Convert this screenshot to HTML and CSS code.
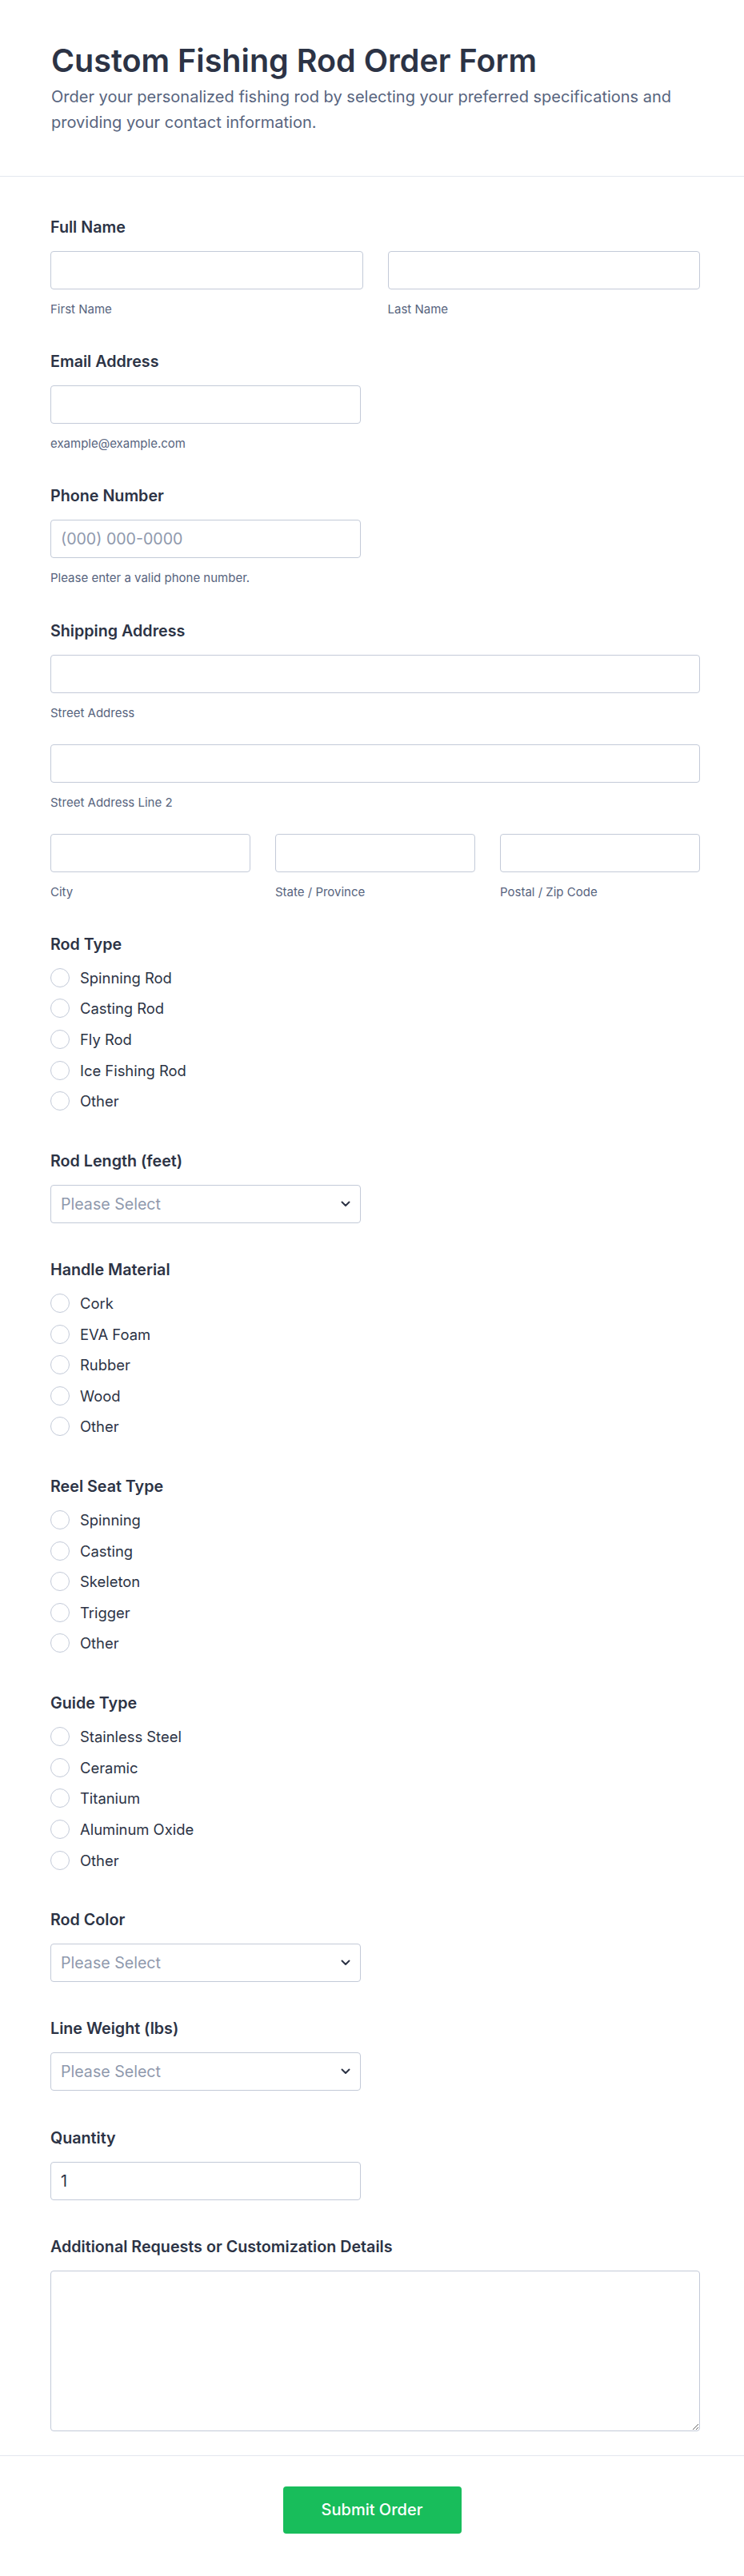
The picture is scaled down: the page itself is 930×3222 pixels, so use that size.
FILE: index.html
```html
<!DOCTYPE html>
<html lang="en">
<head>
<meta charset="utf-8">
<title>Custom Fishing Rod Order Form</title>
<link rel="stylesheet" href="styles.css">
</head>
<body>
<div class="page">
  <header class="header">
    <h1 class="title">Custom Fishing Rod Order Form</h1>
    <p class="subtitle">Order your personalized fishing rod by selecting your preferred specifications and providing your contact information.</p>
  </header>

  <form class="form">
    <div class="field">
      <label class="label">Full Name</label>
      <div class="cols cols-2">
        <div><input class="input" type="text"><span class="sublabel">First Name</span></div>
        <div><input class="input" type="text"><span class="sublabel">Last Name</span></div>
      </div>
    </div>

    <div class="field">
      <label class="label">Email Address</label>
      <input class="input half" type="email">
      <span class="sublabel">example@example.com</span>
    </div>

    <div class="field">
      <label class="label">Phone Number</label>
      <input class="input half" type="tel" placeholder="(000) 000-0000">
      <span class="sublabel">Please enter a valid phone number.</span>
    </div>

    <div class="field">
      <label class="label">Shipping Address</label>
      <div class="addr-row"><input class="input" type="text"><span class="sublabel">Street Address</span></div>
      <div class="addr-row"><input class="input" type="text"><span class="sublabel">Street Address Line 2</span></div>
      <div class="addr-row cols cols-3">
        <div><input class="input" type="text"><span class="sublabel">City</span></div>
        <div><input class="input" type="text"><span class="sublabel">State / Province</span></div>
        <div><input class="input" type="text"><span class="sublabel">Postal / Zip Code</span></div>
      </div>
    </div>

    <div class="field">
      <label class="label">Rod Type</label>
      <div class="options">
        <label class="option"><input class="radio" type="radio" name="rodtype"><span>Spinning Rod</span></label>
        <label class="option"><input class="radio" type="radio" name="rodtype"><span>Casting Rod</span></label>
        <label class="option"><input class="radio" type="radio" name="rodtype"><span>Fly Rod</span></label>
        <label class="option"><input class="radio" type="radio" name="rodtype"><span>Ice Fishing Rod</span></label>
        <label class="option"><input class="radio" type="radio" name="rodtype"><span>Other</span></label>
      </div>
    </div>

    <div class="field">
      <label class="label">Rod Length (feet)</label>
      <div class="select-wrap">
        <select class="select"><option>Please Select</option></select>
        <svg class="chevron" width="12" height="8" viewBox="0 0 12 8"><path d="M1.5 1.5 L6 6 L10.5 1.5" fill="none" stroke="#2c3345" stroke-width="2" stroke-linecap="round" stroke-linejoin="round"/></svg>
      </div>
    </div>

    <div class="field">
      <label class="label">Handle Material</label>
      <div class="options">
        <label class="option"><input class="radio" type="radio" name="handle"><span>Cork</span></label>
        <label class="option"><input class="radio" type="radio" name="handle"><span>EVA Foam</span></label>
        <label class="option"><input class="radio" type="radio" name="handle"><span>Rubber</span></label>
        <label class="option"><input class="radio" type="radio" name="handle"><span>Wood</span></label>
        <label class="option"><input class="radio" type="radio" name="handle"><span>Other</span></label>
      </div>
    </div>

    <div class="field">
      <label class="label">Reel Seat Type</label>
      <div class="options">
        <label class="option"><input class="radio" type="radio" name="reel"><span>Spinning</span></label>
        <label class="option"><input class="radio" type="radio" name="reel"><span>Casting</span></label>
        <label class="option"><input class="radio" type="radio" name="reel"><span>Skeleton</span></label>
        <label class="option"><input class="radio" type="radio" name="reel"><span>Trigger</span></label>
        <label class="option"><input class="radio" type="radio" name="reel"><span>Other</span></label>
      </div>
    </div>

    <div class="field">
      <label class="label">Guide Type</label>
      <div class="options">
        <label class="option"><input class="radio" type="radio" name="guide"><span>Stainless Steel</span></label>
        <label class="option"><input class="radio" type="radio" name="guide"><span>Ceramic</span></label>
        <label class="option"><input class="radio" type="radio" name="guide"><span>Titanium</span></label>
        <label class="option"><input class="radio" type="radio" name="guide"><span>Aluminum Oxide</span></label>
        <label class="option"><input class="radio" type="radio" name="guide"><span>Other</span></label>
      </div>
    </div>

    <div class="field">
      <label class="label">Rod Color</label>
      <div class="select-wrap">
        <select class="select"><option>Please Select</option></select>
        <svg class="chevron" width="12" height="8" viewBox="0 0 12 8"><path d="M1.5 1.5 L6 6 L10.5 1.5" fill="none" stroke="#2c3345" stroke-width="2" stroke-linecap="round" stroke-linejoin="round"/></svg>
      </div>
    </div>

    <div class="field">
      <label class="label">Line Weight (lbs)</label>
      <div class="select-wrap">
        <select class="select"><option>Please Select</option></select>
        <svg class="chevron" width="12" height="8" viewBox="0 0 12 8"><path d="M1.5 1.5 L6 6 L10.5 1.5" fill="none" stroke="#2c3345" stroke-width="2" stroke-linecap="round" stroke-linejoin="round"/></svg>
      </div>
    </div>

    <div class="field">
      <label class="label">Quantity</label>
      <input class="input half" type="number" value="1">
    </div>

    <div class="field">
      <label class="label">Additional Requests or Customization Details</label>
      <textarea class="textarea"></textarea>
    </div>
  </form>

  <footer class="footer">
    <button class="submit" type="button">Submit Order</button>
  </footer>
</div>
</body>
</html>
```

FILE: styles.css
```css
* {
  box-sizing: border-box;
}

body {
  margin: 0;
  background: #ffffff;
  font-family: Inter, "Noto Sans", "Liberation Sans", sans-serif;
  color: #2c3345;
}

.page {
  width: 930px;
}

.header {
  padding: 52px 55px 51px 64px;
  border-bottom: 1px solid #e3e7ef;
}

.title {
  margin: 0;
  font-size: 39.5px;
  line-height: 48px;
  font-weight: 600;
  color: #2c3345;
}

.subtitle {
  margin: 5px 0 0;
  font-size: 20px;
  line-height: 32px;
  font-weight: 400;
  color: #57647e;
}

.form {
  padding: 51px 55px 30px 63px;
}

.field {
  margin-bottom: 46.2px;
}

.field:last-child {
  margin-bottom: 0;
}

.label {
  display: block;
  margin-bottom: 18px;
  font-size: 19.7px;
  line-height: 24px;
  font-weight: 600;
  color: #2c3345;
}

.cols {
  display: grid;
  column-gap: 31px;
}

.cols-2 {
  grid-template-columns: 1fr 1fr;
}

.cols-3 {
  grid-template-columns: 1fr 1fr 1fr;
}

.addr-row + .addr-row {
  margin-top: 32px;
}

.input,
.select,
.textarea {
  display: block;
  width: 100%;
  height: 48px;
  margin: 0;
  padding: 0 12px;
  border: 1px solid #c3cad8;
  border-radius: 4px;
  background: #ffffff;
  font-family: Inter, "Noto Sans", "Liberation Sans", sans-serif;
  font-size: 19.6px;
  color: #2c3345;
  outline: none;
}

.input::placeholder {
  color: #8f99ad;
}

.input[type="number"] {
  -moz-appearance: textfield;
}

.input[type="number"]::-webkit-inner-spin-button,
.input[type="number"]::-webkit-outer-spin-button {
  -webkit-appearance: none;
  margin: 0;
}

.half {
  width: 388px;
}

.sublabel {
  display: block;
  margin-top: 17px;
  font-size: 15px;
  line-height: 15px;
  color: #57647e;
}

.options {
  display: flex;
  flex-direction: column;
  gap: 14.6px;
  margin-top: 1px;
  padding-bottom: 4.5px;
}

.option {
  display: flex;
  align-items: center;
  gap: 13px;
  height: 24px;
  font-size: 18.4px;
  line-height: 24px;
  color: #2c3345;
}

.radio {
  -webkit-appearance: none;
  appearance: none;
  flex: none;
  width: 24px;
  height: 24px;
  margin: 0;
  border: 1px solid #c3cad8;
  border-radius: 50%;
  background: #ffffff;
}

.select-wrap {
  position: relative;
  width: 388px;
}

.select {
  -webkit-appearance: none;
  appearance: none;
  color: #8f99ad;
}

.chevron {
  position: absolute;
  right: 13px;
  top: 20px;
  pointer-events: none;
}

.textarea {
  height: 201px;
  padding: 12px;
  resize: both;
}

.footer {
  display: flex;
  justify-content: center;
  padding: 38px 0 50px;
  border-top: 1px solid #e3e7ef;
}

.submit {
  width: 223px;
  height: 59px;
  border: none;
  border-radius: 4px;
  background: #18bd5b;
  color: #ffffff;
  font-family: Inter, "Noto Sans", "Liberation Sans", sans-serif;
  font-size: 20px;
  font-weight: 500;
}
```
